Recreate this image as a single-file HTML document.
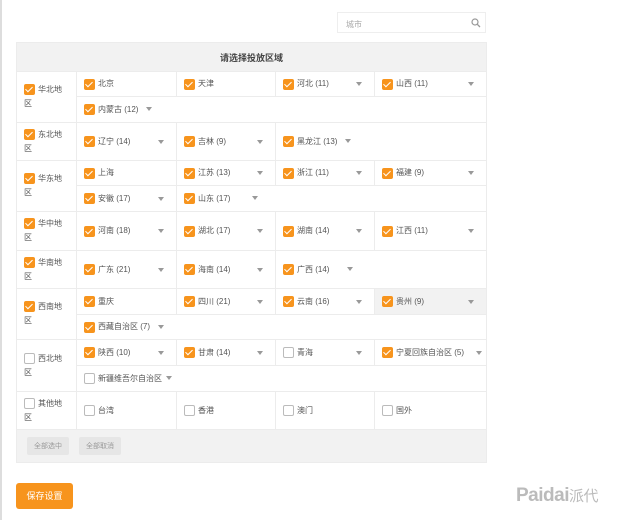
<!DOCTYPE html>
<html><head><meta charset="utf-8"><style>
*{margin:0;padding:0;box-sizing:border-box}
body{width:620px;height:520px;background:#fff;font-family:"Liberation Sans","Noto Sans CJK SC",sans-serif;color:#555;position:relative;overflow:hidden}
.lb{position:absolute;left:0;top:0;width:2px;height:520px;background:#ddd}
.search{position:absolute;left:337px;top:12px;width:149px;height:21px;border:1px solid #eee;font-size:8px;color:#aaa;padding:6px 0 0 8px}
.search svg{position:absolute;right:4px;top:5px}
table{position:absolute;left:16px;top:42px;width:470px;border-collapse:collapse;table-layout:fixed;font-size:8px}
td{border:1px solid #ececec;vertical-align:middle;position:relative;padding:0 0 0 7px;white-space:nowrap}
th{background:#f2f2f2;height:29px;font-size:9px;font-weight:bold;color:#444;border:1px solid #ececec}
.cb{display:inline-block;width:11px;height:11px;border-radius:2px;background:#f7941d;vertical-align:middle;margin-right:3px;position:relative}
.cb:after{content:"";position:absolute;left:3px;top:1px;width:3px;height:6px;border:solid #fff;border-width:0 1.5px 1.5px 0;transform:rotate(45deg)}
.cb.e{background:#fff;border:1px solid #bbb}
.cb.e:after{display:none}
.ar{position:absolute;right:12px;top:50%;margin-top:-2px;border:3.5px solid transparent;border-top:4px solid #999;border-bottom:0}
.ar.i{position:static;display:inline-block;margin:0 0 1px 8px;vertical-align:middle}
.rg{padding:0 0 0 7px;white-space:normal;line-height:14px}
.rg div{width:45px}
.g{background:#f2f2f2}
.foot td{background:#f2f2f2;height:33px;padding-left:10px}
.btn{display:inline-block;background:#e6e6e6;color:#999;font-size:7px;padding:4px 7px;border-radius:2px;margin-right:10px}
.save{position:absolute;left:16px;top:483px;width:57px;height:26px;background:#f7941d;border-radius:3px;color:#fff;font-size:9px;text-align:center;line-height:26px}
.logo{position:absolute;left:516px;top:485px;font-size:19px;font-weight:bold;color:#bbb;letter-spacing:-0.5px}
.logo span{font-weight:normal;font-size:15px}
</style></head><body>
<div class="lb"></div>
<div class="search">城市<svg width="10" height="10" viewBox="0 0 10 10"><circle cx="4" cy="4" r="3" fill="none" stroke="#999" stroke-width="1.2"/><path d="M6.3 6.3L9 9" stroke="#999" stroke-width="1.3"/></svg></div>
<table>
<colgroup><col style="width:60px"><col style="width:100px"><col style="width:99px"><col style="width:99px"><col style="width:112px"></colgroup>
<tr><th colspan="5">请选择投放区域</th></tr>
<tr style="height:25px"><td rowspan="2" class="rg"><div><span class="cb"></span>华北地区</div></td><td><span class="cb"></span>北京</td><td><span class="cb"></span>天津</td><td><span class="cb"></span>河北 (11)<i class="ar"></i></td><td><span class="cb"></span>山西 (11)<i class="ar"></i></td></tr>
<tr style="height:26px"><td colspan="4"><span class="cb"></span>内蒙古 (12)<i class="ar i"></i></td></tr>
<tr style="height:38px"><td class="rg"><div><span class="cb"></span>东北地区</div></td><td><span class="cb"></span>辽宁 (14)<i class="ar"></i></td><td><span class="cb"></span>吉林 (9)<i class="ar"></i></td><td colspan="2"><span class="cb"></span>黑龙江 (13)<i class="ar i"></i></td></tr>
<tr style="height:25px"><td rowspan="2" class="rg"><div><span class="cb"></span>华东地区</div></td><td><span class="cb"></span>上海</td><td><span class="cb"></span>江苏 (13)<i class="ar"></i></td><td><span class="cb"></span>浙江 (11)<i class="ar"></i></td><td><span class="cb"></span>福建 (9)<i class="ar"></i></td></tr>
<tr style="height:26px"><td><span class="cb"></span>安徽 (17)<i class="ar"></i></td><td colspan="3"><span class="cb"></span>山东 (17)<i class="ar i" style="margin-left:22px"></i></td></tr>
<tr style="height:39px"><td class="rg"><div><span class="cb"></span>华中地区</div></td><td><span class="cb"></span>河南 (18)<i class="ar"></i></td><td><span class="cb"></span>湖北 (17)<i class="ar"></i></td><td><span class="cb"></span>湖南 (14)<i class="ar"></i></td><td><span class="cb"></span>江西 (11)<i class="ar"></i></td></tr>
<tr style="height:38px"><td class="rg"><div><span class="cb"></span>华南地区</div></td><td><span class="cb"></span>广东 (21)<i class="ar"></i></td><td><span class="cb"></span>海南 (14)<i class="ar"></i></td><td colspan="2"><span class="cb"></span>广西 (14)<i class="ar i" style="margin-left:18px"></i></td></tr>
<tr style="height:26px"><td rowspan="2" class="rg"><div><span class="cb"></span>西南地区</div></td><td><span class="cb"></span>重庆</td><td><span class="cb"></span>四川 (21)<i class="ar"></i></td><td><span class="cb"></span>云南 (16)<i class="ar"></i></td><td class="g"><span class="cb"></span>贵州 (9)<i class="ar"></i></td></tr>
<tr style="height:25px"><td colspan="4"><span class="cb"></span>西藏自治区 (7)<i class="ar i"></i></td></tr>
<tr style="height:26px"><td rowspan="2" class="rg"><div><span class="cb e"></span>西北地区</div></td><td><span class="cb"></span>陕西 (10)<i class="ar"></i></td><td><span class="cb"></span>甘肃 (14)<i class="ar"></i></td><td><span class="cb e"></span>青海<i class="ar"></i></td><td><span class="cb"></span>宁夏回族自治区 (5)<i class="ar" style="right:4px"></i></td></tr>
<tr style="height:26px"><td colspan="4"><span class="cb e"></span>新疆维吾尔自治区<i class="ar i" style="margin-left:4px"></i></td></tr>
<tr style="height:38px"><td class="rg"><div><span class="cb e"></span>其他地区</div></td><td><span class="cb e"></span>台湾</td><td><span class="cb e"></span>香港</td><td><span class="cb e"></span>澳门</td><td><span class="cb e"></span>国外</td></tr>
<tr class="foot"><td colspan="5"><span class="btn">全部选中</span><span class="btn">全部取消</span></td></tr>
</table>
<div class="save">保存设置</div>
<div class="logo">Paidai<span>派代</span></div>
</body></html>
